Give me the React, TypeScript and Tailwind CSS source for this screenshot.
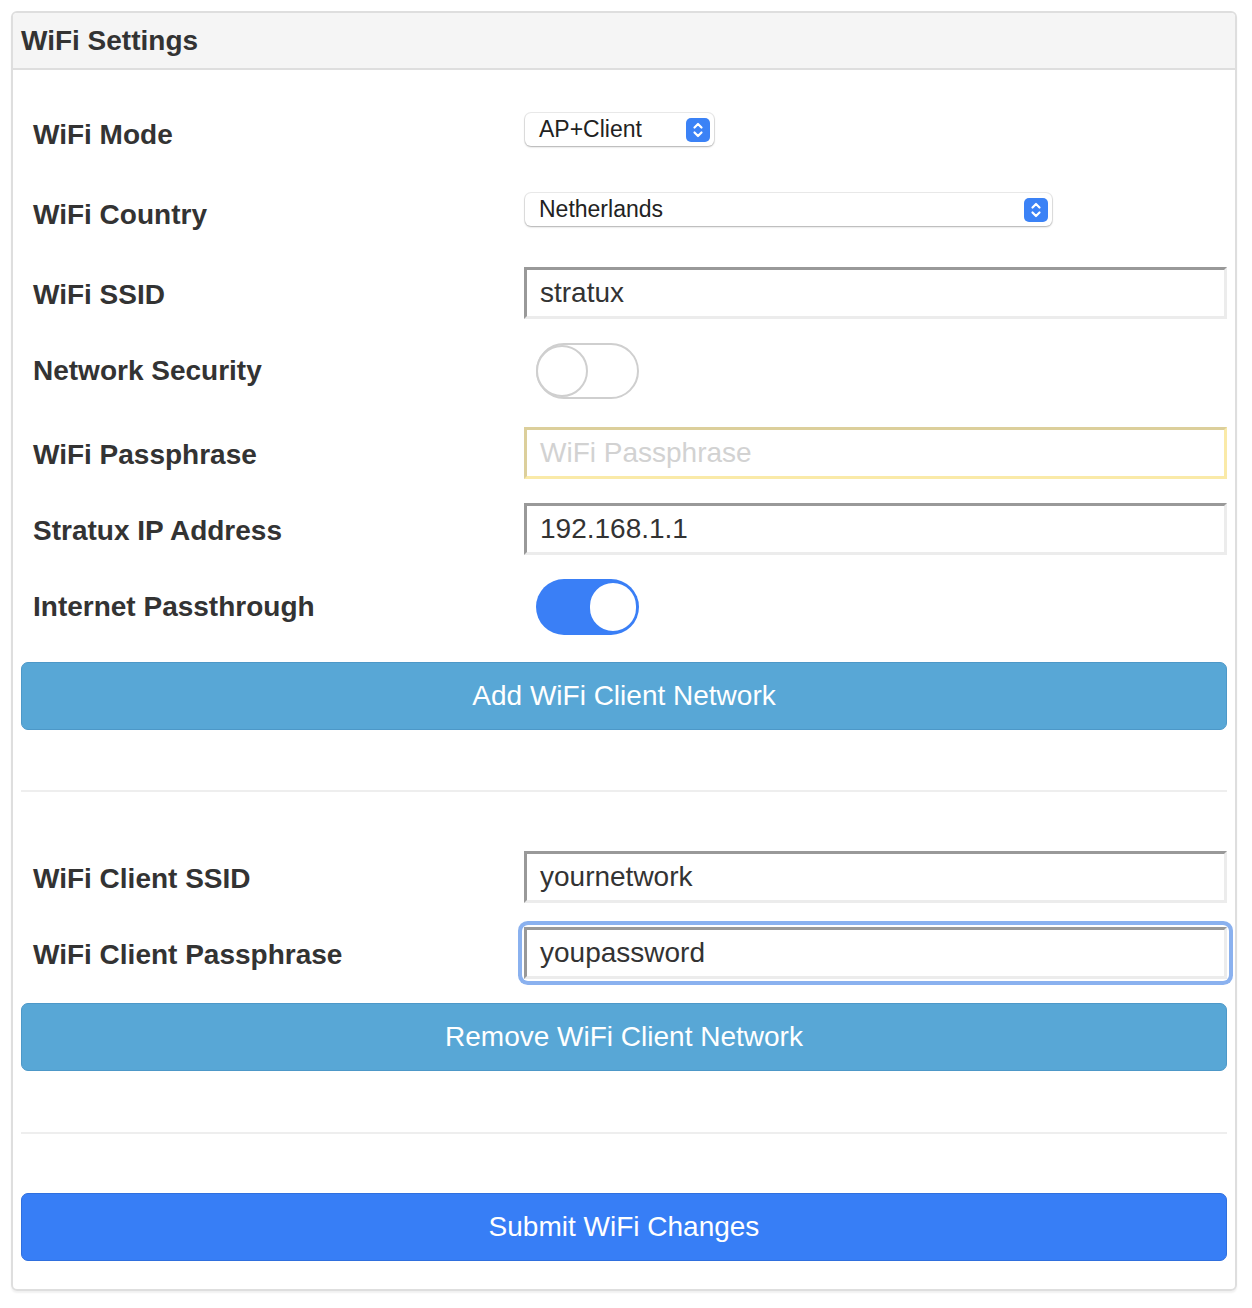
import React from "react";

const font = { fontFamily: '"Liberation Sans", Arial, sans-serif' };

const Label: React.FC<{ children: React.ReactNode; className?: string }> = ({ children, className = "" }) => (
  <div className={`w-[503px] shrink-0 pl-3 text-[28px] font-bold leading-9 text-[#333] ${className}`}>{children}</div>
);

const SelectBox: React.FC<{ value: string; width: string }> = ({ value, width }) => (
  <div
    className={`${width} h-[33px] ml-px flex items-center justify-between rounded-[6px] bg-white pl-[14px] pr-[4px] shadow-[0_0_0_1px_rgba(0,0,0,0.08),0_1px_2px_rgba(0,0,0,0.25)]`}
  >
    <span className="text-[23px] text-[#222] leading-none">{value}</span>
    <span className="flex h-[24px] w-[24px] items-center justify-center rounded-[5px] bg-[#3b82f6]">
      <svg width="12" height="18" viewBox="0 0 12 18" fill="none" stroke="white" strokeWidth="2.2" strokeLinecap="round" strokeLinejoin="round">
        <path d="M2.5 6.5 L6 3 L9.5 6.5" />
        <path d="M2.5 11.5 L6 15 L9.5 11.5" />
      </svg>
    </span>
  </div>
);

const TextBox: React.FC<{ value?: string; placeholder?: string; warn?: boolean }> = ({ value, placeholder, warn }) => (
  <div
    className={`h-[52px] w-full flex items-center border-[3px] bg-white px-[13px] text-[28px] leading-none ${
      warn
        ? "border-t-[#dccf9b] border-l-[#dccf9b] border-r-[#faeaa8] border-b-[#faeaa8]"
        : "border-t-[#999] border-l-[#999] border-r-[#ececec] border-b-[#ececec]"
    }`}
  >
    {value ? <span className="text-[#333]">{value}</span> : <span className="text-[#d2d2d2]">{placeholder}</span>}
  </div>
);

const Toggle: React.FC<{ on?: boolean }> = ({ on }) =>
  on ? (
    <div className="ml-3 flex h-[56px] w-[103px] items-center justify-end rounded-full bg-[#3a7ff6] pr-px">
      <div className="h-[52px] w-[50px] rounded-full border-2 border-[#3a7ff6] bg-white" />
    </div>
  ) : (
    <div className="ml-3 flex h-[56px] w-[103px] items-center rounded-full border-2 border-[#cfcfcf] bg-white">
      <div className="h-[52px] w-[52px] rounded-full border-2 border-[#cfcfcf] bg-white -ml-[2px]" />
    </div>
  );

// row height follows the control; the label may hang a few px lower
const Row: React.FC<{ label: string; labelClass?: string; children: React.ReactNode; className?: string }> = ({
  label,
  labelClass = "",
  children,
  className = "",
}) => (
  <div className={`flex items-center ${className}`}>
    <Label className={labelClass}>{label}</Label>
    <div className="flex flex-1 items-center">{children}</div>
  </div>
);

const Btn: React.FC<{ children: React.ReactNode; primary?: boolean; className?: string }> = ({ children, primary, className = "" }) => (
  <button
    className={`block h-[68px] w-full rounded-[7px] border text-[28px] text-white ${
      primary ? "bg-[#377ef6] border-[#2f6fde]" : "bg-[#58a7d6] border-[#4d98c8]"
    } ${className}`}
  >
    {children}
  </button>
);

export default function App() {
  return (
    <div className="min-h-screen bg-white pt-[11px] pl-[11px] pr-[15px] pb-[11px]" style={font}>
      <div className="overflow-hidden rounded-[6px] border-2 border-[#dedede] shadow-[0_2px_2px_rgba(0,0,0,0.06)]">
        <div className="flex h-[57px] items-center border-b-2 border-[#dedede] bg-[#f5f5f5] px-[8px]">
          <h2 className="text-[28px] font-bold text-[#333]">WiFi Settings</h2>
        </div>
        <div className="px-[8px] pt-[43px] pb-[28px]">
          <Row label="WiFi Mode" labelClass="mt-[11px]" className="h-[33px]">
            <SelectBox value="AP+Client" width="w-[189px]" />
          </Row>
          <Row label="WiFi Country" labelClass="mt-[11px]" className="mt-[47px] h-[33px]">
            <SelectBox value="Netherlands" width="w-[527px]" />
          </Row>
          <Row label="WiFi SSID" labelClass="mt-[4px]" className="mt-[41px] h-[52px]">
            <TextBox value="stratux" />
          </Row>
          <Row label="Network Security" className="mt-[24px] h-[56px]">
            <Toggle />
          </Row>
          <Row label="WiFi Passphrase" labelClass="mt-[4px]" className="mt-[28px] h-[52px]">
            <TextBox placeholder="WiFi Passphrase" warn />
          </Row>
          <Row label="Stratux IP Address" labelClass="mt-[4px]" className="mt-[24px] h-[52px]">
            <TextBox value="192.168.1.1" />
          </Row>
          <Row label="Internet Passthrough" className="mt-[24px] h-[56px]">
            <Toggle on />
          </Row>
          <Btn className="mt-[27px]">Add WiFi Client Network</Btn>
          <hr className="mt-[60px] border-t-2 border-[#eeeeee]" />
          <Row label="WiFi Client SSID" labelClass="mt-[4px]" className="mt-[59px] h-[52px]">
            <TextBox value="yournetwork" />
          </Row>
          <Row label="WiFi Client Passphrase" labelClass="mt-[4px]" className="mt-[24px] h-[52px]">
            <div className="w-full rounded-[4px] shadow-[0_0_0_2px_#fff,0_0_0_6px_#8ab1ef]">
              <TextBox value="youpassword" />
            </div>
          </Row>
          <Btn className="mt-[24px]">Remove WiFi Client Network</Btn>
          <hr className="mt-[61px] border-t-2 border-[#eeeeee]" />
          <Btn primary className="mt-[59px]">Submit WiFi Changes</Btn>
        </div>
      </div>
    </div>
  );
}
